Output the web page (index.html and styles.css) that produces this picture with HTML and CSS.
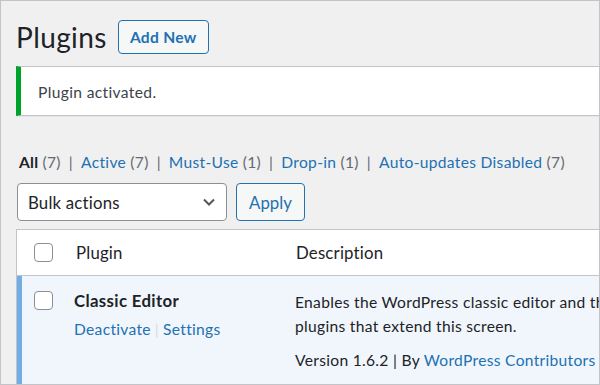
FILE: index.html
```html
<!DOCTYPE html>
<html lang="en">
<head>
    <meta charset="UTF-8">
    <meta name="viewport" content="width=device-width, initial-scale=1.0">
    <title>Plugins</title>
    <link rel="stylesheet" href="styles.css">
</head>
<body>
    <div class="frame">
        <div class="wrap">
            <div class="title-row">
                <h1>Plugins</h1>
                <a class="button page-action" href="#">Add New</a>
            </div>

            <div class="notice">
                <p>Plugin activated.</p>
            </div>

            <ul class="filters">
                <li class="current">All <span class="count">(7)</span></li>
                <li class="sep">|</li>
                <li><a href="#">Active <span class="count">(7)</span></a></li>
                <li class="sep">|</li>
                <li><a href="#">Must-Use <span class="count">(1)</span></a></li>
                <li class="sep">|</li>
                <li><a href="#">Drop-in <span class="count">(1)</span></a></li>
                <li class="sep">|</li>
                <li><a href="#">Auto-updates Disabled <span class="count">(7)</span></a></li>
            </ul>

            <div class="tablenav">
                <div class="select">
                    <span>Bulk actions</span>
                    <svg width="20" height="20" viewBox="0 0 20 20">
                        <path d="M5 7.5l5 5 5-5" fill="none" stroke="#50575e" stroke-width="2"/>
                    </svg>
                </div>
                <button class="button">Apply</button>
            </div>

            <div class="plugins">
                <div class="row head">
                    <div class="cb"><span class="checkbox"></span></div>
                    <div class="col-name">Plugin</div>
                    <div class="col-desc">Description</div>
                </div>
                <div class="row active">
                    <div class="cb"><span class="checkbox"></span></div>
                    <div class="col-name">
                        <strong>Classic Editor</strong>
                        <div class="row-actions">
                            <a href="#">Deactivate</a><span class="bar">|</span><a href="#">Settings</a>
                        </div>
                    </div>
                    <div class="col-desc">
                        <p class="desc">Enables the WordPress classic editor and the old-style Edit Post screen with TinyMCE, Meta Boxes, etc. Supports the older<br>plugins that extend this screen.</p>
                        <p class="meta">Version 1.6.2 | By <a href="#">WordPress Contributors</a> | <a href="#">View details</a></p>
                    </div>
                </div>
            </div>
        </div>
    </div>
</body>
</html>
```

FILE: styles.css
```css
body {
    margin: 0;
    font-family: Lato, "Noto Sans", sans-serif;
    color: #1d2327;
}

a {
    color: #2271b1;
    text-decoration: none;
}

.frame {
    width: 600px;
    height: 385px;
    box-sizing: border-box;
    border: 1px solid #c3c4c7;
    background: #f0f0f1;
    overflow: hidden;
}

.wrap {
    width: 760px;
    padding-left: 15px;
}

.title-row {
    display: flex;
    align-items: center;
    gap: 11px;
    margin-top: 19px;
}

.title-row h1 {
    margin: 0;
    font-size: 28px;
    font-weight: 400;
    line-height: 34px;
    letter-spacing: 0.4px;
}

.button {
    display: inline-flex;
    align-items: center;
    justify-content: center;
    box-sizing: border-box;
    height: 34px;
    padding: 0 11px;
    border: 1px solid #2271b1;
    border-radius: 4px;
    background: #f6f7f7;
    color: #2271b1;
    font-family: inherit;
    font-size: 15.6px;
    letter-spacing: 0.3px;
    white-space: nowrap;
}

.page-action {
    width: 91px;
    font-weight: 700;
}

.notice {
    margin-top: 12px;
    background: #fff;
    border: 1px solid #c3c4c7;
    border-left: 5px solid #00a32a;
    box-shadow: 0 1px 1px rgba(0, 0, 0, 0.04);
}

.notice p {
    margin: 0;
    padding: 14px 0 12px 17px;
    font-size: 15.6px;
    line-height: 22px;
    letter-spacing: 0.35px;
    color: #3c434a;
}

.filters {
    display: flex;
    gap: 8px;
    list-style: none;
    margin: 35px 0 0 3px;
    padding: 0;
    font-size: 15.6px;
    line-height: 22px;
    letter-spacing: 0.3px;
}

.filters .current {
    font-weight: 700;
}

.filters .count,
.filters .sep {
    color: #646970;
    font-weight: 400;
}

.tablenav {
    display: flex;
    gap: 9px;
    margin: 10px 0 0 1px;
}

.select {
    display: flex;
    align-items: center;
    justify-content: space-between;
    box-sizing: border-box;
    width: 210px;
    height: 38px;
    padding: 0 7px 0 10px;
    border: 1px solid #8c8f94;
    border-radius: 4px;
    background: #fff;
    font-size: 16.8px;
    letter-spacing: 0.2px;
}

.tablenav .button {
    width: 69px;
    height: 38px;
    font-size: 16.8px;
    letter-spacing: 0;
}

.plugins {
    margin-top: 8px;
    background: #fff;
    border-top: 1px solid #c3c4c7;
    border-left: 1px solid #c3c4c7;
}

.row {
    display: grid;
    grid-template-columns: 59px 220px 1fr;
    font-size: 16.8px;
    letter-spacing: 0.2px;
}

.head {
    height: 45px;
    align-items: center;
    border-bottom: 1px solid #c3c4c7;
}

.cb {
    padding-left: 17px;
    display: flex;
}

.checkbox {
    display: block;
    box-sizing: border-box;
    width: 19px;
    height: 19px;
    border: 1px solid #8c8f94;
    border-radius: 4px;
    background: #fff;
}

.active {
    grid-template-columns: 57px 221px 1fr;
    min-height: 120px;
    background: #f0f6fc;
    box-shadow: inset 5px 0 0 #72aee6;
    padding-top: 12px;
    line-height: 25px;
}

.active .cb {
    padding-top: 3px;
}

.active strong {
    display: block;
    font-weight: 700;
    letter-spacing: 0.35px;
}

.row-actions {
    margin-top: 5px;
    font-size: 15.6px;
    line-height: 22px;
    letter-spacing: 0.3px;
}

.row-actions .bar {
    color: #dcdcde;
    margin: 0 4px;
}

.col-desc p {
    margin: 0;
    white-space: nowrap;
    font-size: 15.6px;
    letter-spacing: 0.3px;
}

.col-desc .desc {
    padding-top: 2px;
    line-height: 24px;
}

.col-desc .meta {
    margin-top: 10px;
}
```
